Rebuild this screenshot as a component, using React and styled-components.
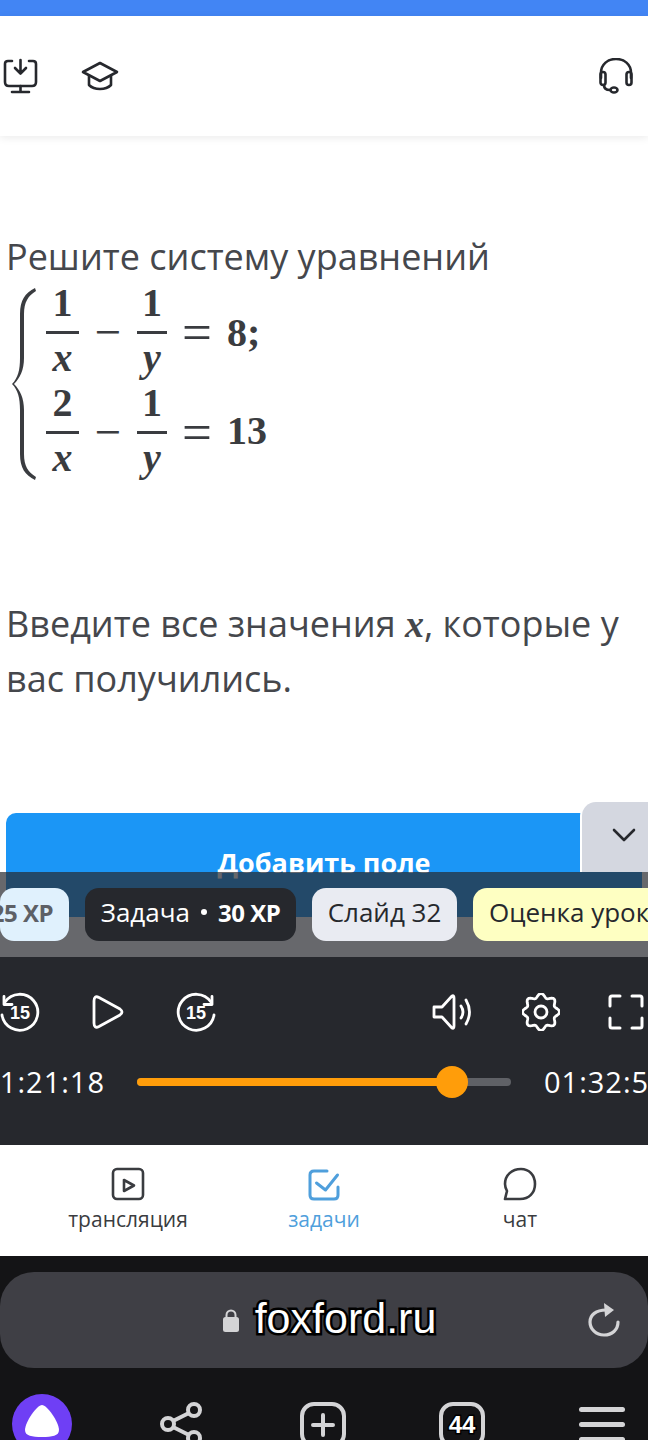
import React from 'react';
import styled, { createGlobalStyle } from 'styled-components';

const GlobalStyle = createGlobalStyle`
  html, body { margin: 0; padding: 0; background: #fff; }
  #root { width: 648px; height: 1440px; overflow: hidden; }
`;

const Page = styled.div`
  position: relative;
  width: 648px;
  height: 1440px;
  overflow: hidden;
  display: flex;
  flex-direction: column;
  background: #fff;
  font-family: "Open Sans", "Noto Sans", sans-serif;
`;

const TopBar = styled.div`
  height: 16px;
  flex: none;
  background: #4285f4;
`;

const Header = styled.header`
  height: 120px;
  flex: none;
  display: flex;
  align-items: center;
  padding: 0 15px 0 3px;
  box-sizing: border-box;
  background: #fff;
  box-shadow: 0 2px 8px rgba(0, 0, 0, 0.08);
  color: #26282d;
`;

const HeaderGroup = styled.div`
  display: flex;
  align-items: center;
  gap: 42px;
  margin-right: auto;
`;

const Lesson = styled.main`
  height: 736px;
  flex: none;
  padding: 93px 0 0 6px;
  box-sizing: border-box;
  display: flex;
  flex-direction: column;
  color: #45474c;
`;

const Paragraph = styled.p`
  margin: 0;
  font-size: 36px;
  line-height: 55px;
`;

const System = styled.div`
  display: flex;
  align-items: flex-start;
  height: 192px;
  margin: 4px 0 0 6px;
  color: #3a3c40;
  font-family: "Liberation Serif", serif;
  font-weight: 700;
`;

const Equations = styled.div`
  display: flex;
  flex-direction: column;
  margin: -8px 0 0 10px;
`;

const Equation = styled.div`
  display: flex;
  align-items: center;
  height: 100px;
  font-size: 40px;
`;

const Fraction = styled.span`
  width: ${(p) => p.$width}px;
  display: flex;
  flex-direction: column;
  align-items: center;
  line-height: 47px;
`;

const Numerator = styled.span`
  width: 100%;
  padding-bottom: 5px;
  text-align: center;
  border-bottom: 3px solid #3a3c40;
`;

const Denominator = styled.span`
  font-style: italic;
`;

const Operator = styled.span`
  width: ${(p) => p.$width}px;
  padding-top: 4px;
  text-align: center;
  font-size: ${(p) => p.$size}px;
  font-weight: 400;
`;

const Result = styled.span`
  padding-top: ${(p) => p.$top}px;
`;

const MathVar = styled.span`
  font-family: "Liberation Serif", serif;
  font-size: 38px;
  font-style: italic;
  font-weight: 700;
  line-height: 1;
`;

const Prompt = styled(Paragraph)`
  margin-top: 116px;
`;

const ActionRow = styled.div`
  margin: 107px 6px 0 0;
  height: 104px;
  flex: none;
  border-radius: 10px 10px 0 0;
  background: #1b96f6;
  color: #fff;
  font-size: 27px;
  font-weight: 700;
  line-height: 100px;
  text-align: center;
`;

const Overlay = styled.div`
  position: absolute;
  left: 0;
  right: 0;
  top: 872px;
  height: 85px;
  display: flex;
  align-items: center;
  gap: 16px;
  background: rgba(38, 40, 45, 0.7);
  white-space: nowrap;
`;

const CollapseTab = styled.button`
  position: absolute;
  right: 0;
  top: 802px;
  width: 66px;
  height: 70px;
  padding: 0 0 2px 18px;
  border: 0;
  border-radius: 14px 0 0 0;
  background: #d4d7e0;
  box-shadow: -2px 0 0 #fff;
  color: #26282d;
`;

const Chip = styled.div`
  flex: none;
  width: ${(p) => p.$width}px;
  height: 53px;
  box-sizing: border-box;
  display: flex;
  align-items: center;
  justify-content: ${(p) => p.$align || 'center'};
  padding: 0 ${(p) => p.$right || 0}px 5px ${(p) => p.$inset || 0}px;
  gap: 11px;
  border-radius: 14px;
  font-size: 26px;
  color: ${(p) => p.$color};
  background: ${(p) => p.$bg};
  overflow: hidden;
`;

const ChipStrong = styled.strong`
  font-size: 24px;
  font-weight: 700;
  letter-spacing: -0.5px;
`;

const Dot = styled.span`
  width: 6px;
  height: 6px;
  border-radius: 50%;
  background: #fff;
`;

const Player = styled.section`
  position: absolute;
  left: 0;
  right: 0;
  top: 957px;
  height: 188px;
  background: #26282d;
  color: #fff;
`;

const Controls = styled.div`
  height: 100px;
  padding-top: 10px;
  box-sizing: border-box;
  display: flex;
  align-items: center;
  gap: 51px;
`;

const ControlsRight = styled.div`
  display: flex;
  align-items: center;
  gap: 48px;
  margin-left: auto;
  margin-right: 4px;
`;

const Timeline = styled.div`
  display: flex;
  align-items: center;
  margin-top: 5px;
  font-size: 29px;
  letter-spacing: 1px;
  white-space: nowrap;
`;

const TimeStart = styled.span`
  width: 105px;
  flex: none;
  margin-right: 32px;
  display: flex;
  justify-content: flex-end;
`;

const Track = styled.div`
  position: relative;
  width: 374px;
  height: 8px;
  flex: none;
  border-radius: 4px;
  background: #5f6166;
`;

const Progress = styled.div`
  height: 100%;
  border-radius: 4px;
  background: #ff9d0a;
`;

const Knob = styled.div`
  position: absolute;
  top: -12px;
  width: 32px;
  height: 32px;
  margin-left: -16px;
  border-radius: 50%;
  background: #ff9d0a;
`;

const TimeEnd = styled.span`
  margin-left: 33px;
`;

const Tabs = styled.nav`
  position: absolute;
  left: 0;
  right: 0;
  top: 1145px;
  height: 111px;
  padding: 0 30px;
  box-sizing: border-box;
  display: grid;
  grid-template-columns: repeat(3, 196px);
  background: #fff;
`;

const Tab = styled.div`
  display: flex;
  flex-direction: column;
  align-items: center;
  padding-top: 22px;
  gap: 5px;
  font-size: 21px;
  line-height: 27px;
  color: ${(p) => (p.$active ? '#4f9fdc' : '#3a3c40')};
`;

const Browser = styled.footer`
  position: absolute;
  left: 0;
  right: 0;
  top: 1256px;
  height: 184px;
  background: #141416;
`;

const UrlBar = styled.div`
  position: relative;
  height: 96px;
  margin: 16px 0 0;
  padding-left: 11px;
  border-radius: 34px;
  background: #3f3f45;
  display: flex;
  align-items: center;
  justify-content: center;
  gap: 16px;
`;

const Domain = styled.span`
  padding-bottom: 3px;
  font-family: "Liberation Sans", Arial, sans-serif;
  font-size: 43px;
  color: #fff;
  -webkit-text-stroke: 5px #000;
  paint-order: stroke fill;
  line-height: 1;
`;

const Reload = styled.span`
  position: absolute;
  right: 28px;
  top: 31px;
  color: #d4d4d6;
`;

const BrowserNav = styled.div`
  height: 72px;
  padding: 26px 0 0 12px;
  display: grid;
  grid-template-columns: 148px 140px 139px 140px 46px;
  align-items: start;
  color: #d4d4d6;
`;

const Alice = styled.div`
  width: 60px;
  height: 60px;
  border-radius: 50%;
  background: #6f3ff5;
  display: flex;
  justify-content: center;
  padding-top: 11px;
  box-sizing: border-box;
`;

const ShareSlot = styled.div`
  margin-top: 8px;
  line-height: 0;
`;

const TabCount = styled.div`
  width: 46px;
  height: 46px;
  margin-top: 8px;
  box-sizing: border-box;
  border: 4px solid #d4d4d6;
  border-radius: 14px;
  display: flex;
  align-items: center;
  justify-content: center;
  font-family: "Liberation Sans", Arial, sans-serif;
  font-size: 24px;
  font-weight: 700;
  color: #fff;
  -webkit-text-stroke: 3px #000;
  paint-order: stroke fill;
`;

const NewTab = styled(TabCount)`
  color: #d4d4d6;
  font-size: 0;
`;

const Burger = styled.div`
  margin-top: 13px;
  display: flex;
  flex-direction: column;
  gap: 10px;
`;

const BurgerLine = styled.span`
  height: 5px;
  border-radius: 3px;
  background: #d4d4d6;
`;

const Stroke = ({ size, w = size, children, sw = 2.4 }) => (
  <svg width={w} height={size} viewBox={`0 0 ${w} ${size}`} fill="none" stroke="currentColor" strokeWidth={sw} strokeLinecap="round" strokeLinejoin="round">
    {children}
  </svg>
);

const MonitorIcon = () => (
  <Stroke size={36} w={36} sw={2.6}>
    <path d="M9 3H5Q2 3 2 6V24Q2 28 6 28H29Q33 28 33 24V6Q33 3 30 3H26" />
    <path d="M17.5 2V15M12 10L17.5 15.5L23 10M17.5 28V34M9 34H26" />
  </Stroke>
);

const CapIcon = () => (
  <Stroke size={30} w={38} sw={2.6}>
    <path d="M19 2L36 11L19 20L2 11Z" />
    <path d="M8 15V24Q12 28 19 28Q26 28 30 24V15" />
  </Stroke>
);

const HeadsetIcon = () => (
  <Stroke size={36} w={34} sw={2.6}>
    <path d="M2 20V15C2 6 9 1 17 1S32 6 32 15V20" />
    <rect x="1.5" y="14" width="5" height="13" rx="2.5" />
    <rect x="27.5" y="14" width="5" height="13" rx="2.5" />
    <path d="M5 27Q5 32 11 32" />
    <ellipse cx="15" cy="32" rx="3.5" ry="2.5" />
  </Stroke>
);

const Chevron = () => (
  <Stroke size={16} w={26} sw={2.6}>
    <path d="M3 3L13 13L23 3" />
  </Stroke>
);

// the arc is mirrored for the back button, the number stays readable
const Replay = ({ forward }) => (
  <svg width="40" height="40" viewBox="0 0 40 40" fill="none" stroke="currentColor" strokeWidth="2.8" strokeLinecap="round" strokeLinejoin="round">
    <g transform={forward ? undefined : 'translate(40 0) scale(-1 1)'}>
      <path d="M38 23A18 18 0 1 1 35 10" />
      <path d="M28 12.5H36V4.5" />
    </g>
    <text x="20" y="26.5" textAnchor="middle" fontFamily="Liberation Sans, sans-serif" fontSize="18" fontWeight="700" fill="currentColor" stroke="none">15</text>
  </svg>
);

const PlayIcon = () => (
  <Stroke size={36} w={34} sw={2.8}>
    <path d="M3 7Q3 1 8 3.5L29 15Q33 18 29 21L8 32.5Q3 35 3 29Z" />
  </Stroke>
);

const VolumeIcon = () => (
  <Stroke size={38} w={42} sw={2.8}>
    <path d="M2 14V24H10L20 35Q22 36 22 33V5Q22 2 20 3L10 14Z" />
    <path d="M29 13Q33 19 29 25M34 7Q41 19 34 31" />
  </Stroke>
);

const gearPath = () => {
  const points = [];
  for (let i = 0; i < 96; i += 1) {
    const angle = (i / 96) * Math.PI * 2;
    const radius = 16.5 + 2 * Math.cos(angle * 8);
    points.push(`${(19 + radius * Math.sin(angle)).toFixed(2)} ${(19 - radius * Math.cos(angle)).toFixed(2)}`);
  }
  return `M${points.join('L')}Z`;
};

const GearIcon = () => (
  <Stroke size={38} w={38} sw={2.8}>
    <path d={gearPath()} />
    <circle cx="19" cy="19" r="6" />
  </Stroke>
);

const FullscreenIcon = () => (
  <Stroke size={36} w={36} sw={3}>
    <path d="M12 2H4Q2 2 2 4V12M24 2H32Q34 2 34 4V12M2 24V32Q2 34 4 34H12M34 24V32Q34 34 32 34H24" />
  </Stroke>
);

const TabVideoIcon = () => (
  <Stroke size={34} w={34} sw={2.6}>
    <rect x="2" y="2" width="30" height="30" rx="4" />
    <path d="M13 13V24L23 18.5Z" />
  </Stroke>
);

const TabCheckIcon = () => (
  <Stroke size={34} w={34} sw={3}>
    <path d="M20 4H7Q3 4 3 8V28Q3 32 7 32H27Q31 32 31 28V20" />
    <path d="M9.5 16L18.5 23L30.5 8" />
  </Stroke>
);

const TabChatIcon = () => (
  <Stroke size={34} w={34} sw={2.6}>
    <path d="M18 2C9 2 2 8 2 17C2 20 3 22 4 24L2 32H17C26 32 32 26 32 17C32 8 26 2 18 2Z" />
  </Stroke>
);

const LockIcon = () => (
  <svg width="16" height="24" viewBox="0 0 16 24" fill="#d4d4d6">
    <rect y="9" width="16" height="15" rx="2.5" />
    <path d="M3.5 10V7a4.5 4.5 0 0 1 9 0v3" fill="none" stroke="#d4d4d6" strokeWidth="2" />
  </svg>
);

const ReloadIcon = () => (
  <svg width="32" height="34" viewBox="0 0 32 34" fill="none" stroke="currentColor" strokeWidth="3.2" strokeLinecap="round">
    <path d="M18 7C8 7 2 12 2 19S8 32 16 32S30 27 30 19" />
    <path d="M16 0L26 7L17 14Z" fill="currentColor" stroke="none" />
  </svg>
);

const AliceMark = () => (
  <svg width="34" height="32" viewBox="0 0 34 32" fill="#fff">
    <path d="M17 0C22 0 34 17 34 25C34 31 27 32 17 32S0 31 0 25C0 17 12 0 17 0Z" />
  </svg>
);

const ShareIcon = () => (
  <svg width="44" height="44" viewBox="0 0 44 44" fill="none" stroke="currentColor" strokeWidth="4">
    <circle cx="34" cy="8" r="6" />
    <circle cx="8" cy="22" r="6" />
    <circle cx="34" cy="36" r="6" />
    <path d="M13 19L29 11M13 25L29 33" />
  </svg>
);

const Brace = () => (
  <svg width="24" height="192" viewBox="0 0 24 192" fill="#3a3c40">
    <path d="M24 3C16 8 12 14 12 26V70C12 82 8 90 2 96C8 102 12 110 12 122V166C12 178 16 184 24 189L23 192C13 187 8 180 8 166V122C8 110 6 102 0 96C6 90 8 82 8 70V26C8 12 13 5 23 0Z" />
  </svg>
);

const Row = ({ num, result, top }) => (
  <Equation>
    <Fraction $width={33}><Numerator>{num}</Numerator><Denominator>x</Denominator></Fraction>
    <Operator $width={58} $size={47}>−</Operator>
    <Fraction $width={30}><Numerator>1</Numerator><Denominator>y</Denominator></Fraction>
    <Operator $width={60} $size={53}>=</Operator>
    <Result $top={top}>{result}</Result>
  </Equation>
);

const App = () => (
  <Page>
    <GlobalStyle />
    <TopBar />
    <Header>
      <HeaderGroup>
        <MonitorIcon />
        <CapIcon />
      </HeaderGroup>
      <HeadsetIcon />
    </Header>
    <Lesson>
      <Paragraph>Решите систему уравнений</Paragraph>
      <System>
        <Brace />
        <Equations>
          <Row num="1" result="8;" top={4} />
          <Row num="2" result="13" top={0} />
        </Equations>
      </System>
      <Prompt>
        Введите все значения <MathVar>x</MathVar>, которые у<br />вас получились.
      </Prompt>
      <ActionRow>Добавить поле</ActionRow>
    </Lesson>
    <CollapseTab aria-label="Свернуть"><Chevron /></CollapseTab>
    <Overlay>
      <Chip $width={69} $align="flex-end" $right={16} $color="#5d6066" $bg="#e0f1fd"><ChipStrong>25 XP</ChipStrong></Chip>
      <Chip $width={211} $color="#fff" $bg="#26282d">Задача<Dot /><ChipStrong>30 XP</ChipStrong></Chip>
      <Chip $width={145} $color="#26282d" $bg="#e9ebf2">Слайд 32</Chip>
      <Chip $width={200} $align="flex-start" $inset={16} $color="#26282d" $bg="#feffc2">Оценка урока</Chip>
    </Overlay>
    <Player>
      <Controls>
        <Replay />
        <PlayIcon />
        <Replay forward />
        <ControlsRight>
          <VolumeIcon />
          <GearIcon />
          <FullscreenIcon />
        </ControlsRight>
      </Controls>
      <Timeline>
        <TimeStart>01:21:18</TimeStart>
        <Track>
          <Progress style={{ width: '84.2%' }} />
          <Knob style={{ left: '84.2%' }} />
        </Track>
        <TimeEnd>01:32:50</TimeEnd>
      </Timeline>
    </Player>
    <Tabs>
      <Tab><TabVideoIcon />трансляция</Tab>
      <Tab $active><TabCheckIcon />задачи</Tab>
      <Tab><TabChatIcon />чат</Tab>
    </Tabs>
    <Browser>
      <UrlBar>
        <LockIcon />
        <Domain>foxford.ru</Domain>
        <Reload><ReloadIcon /></Reload>
      </UrlBar>
      <BrowserNav>
        <Alice><AliceMark /></Alice>
        <ShareSlot><ShareIcon /></ShareSlot>
        <NewTab>
          <svg width="26" height="26" viewBox="0 0 26 26" stroke="currentColor" strokeWidth="4" strokeLinecap="round"><path d="M13 3V23M3 13H23" /></svg>
        </NewTab>
        <TabCount>44</TabCount>
        <Burger><BurgerLine /><BurgerLine /><BurgerLine /></Burger>
      </BrowserNav>
    </Browser>
  </Page>
);

export default App;
